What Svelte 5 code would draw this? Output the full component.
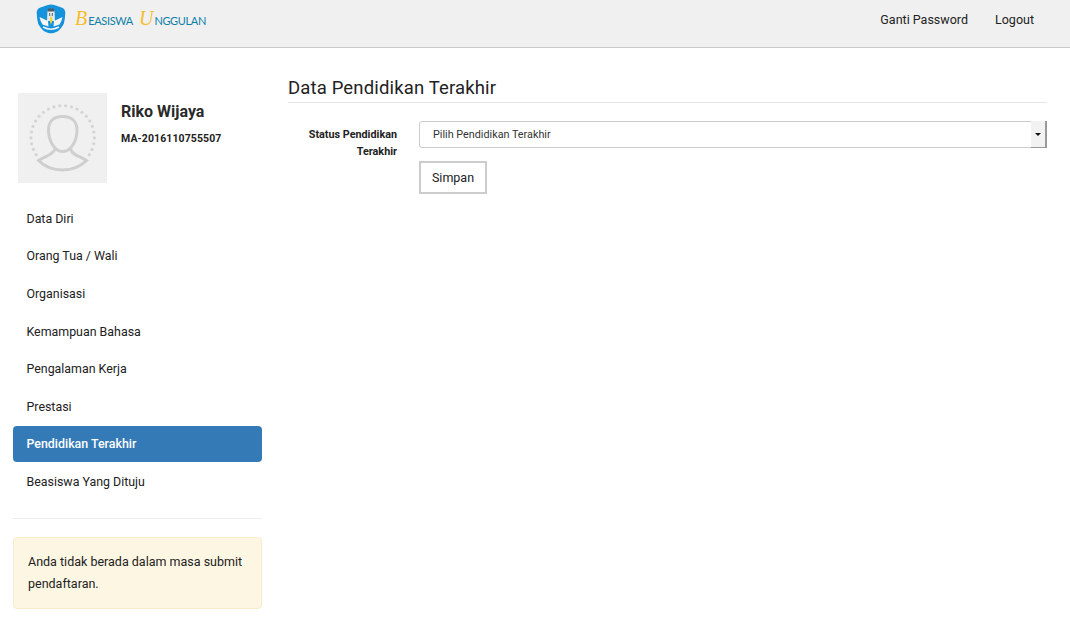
<script>
  const items = ['Data Diri','Orang Tua / Wali','Organisasi','Kemampuan Bahasa','Pengalaman Kerja','Prestasi','Pendidikan Terakhir','Beasiswa Yang Dituju'];
  const dots = Array.from({length: 24}, (_, i) => {
    const a = ((147 + (i / 23) * 246) * Math.PI) / 180;
    return { x: 44.7 + Math.cos(a) * 31.7, y: 44.4 + Math.sin(a) * 31.7 };
  });
</script>

<header class="navbar">
  <div class="brand">
    <svg class="emblem" width="30" height="30" viewBox="0 0 30 30" aria-hidden="true">
      <path d="M15 .5 Q17 .6 19 1.300 L25.500 3.500 Q29.300 4.800 29.300 9 L28.800 15 Q28.500 20 25.500 23.500 Q22 28 17.500 29 Q15 29.600 12.500 29 Q8 28 4.500 23.500 Q1.500 20 1.200 15 L.7 9 Q.7 4.800 4.500 3.500 L11 1.300 Q13 .6 15 .5 Z" fill="#1592dc"/>
      <path d="M3.500 13 L12 17 L12.500 22.500 L6.500 20.500 Q4.500 18 3.500 13 Z M26.500 13 L18 17 L17.500 22.500 L23.500 20.500 Q25.500 18 26.500 13 Z" fill="#f6f6f6"/>
      <path d="M11.500 6.500 L18.500 6.500 L19 17 L11 17 Z" fill="#e3e8ea"/>
      <path d="M12 4.500 L18 4.500 L18.500 7.500 L11.500 7.500 Z" fill="#4d5f6b"/>
      <path d="M13 9 H14.200 V12 H13 Z M15.800 9 H17 V12 H15.800 Z" fill="#6c7c86"/>
      <path d="M15 12 Q17.300 16 15 20.500 Q12.700 16 15 12 Z" fill="#f5d327"/>
      <path d="M7 23 Q15 27.500 23 23" stroke="#f2f5f7" stroke-width="1.600" fill="none"/>
    </svg>
    <span class="wordmark"><span class="word"><i>B</i>EASISWA</span><span class="word"><i>U</i>NGGULAN</span></span>
  </div>
  <nav class="topnav"><a href="#a">Ganti Password</a><a href="#b">Logout</a></nav>
</header>

<div class="page">
  <aside class="sidebar">
    <div class="profile">
      <svg class="avatar" width="89" height="90" viewBox="0 0 89 90" aria-hidden="true">
        <rect width="89" height="90" fill="#f0f0f0"/>
        {#each dots as d}<circle cx={d.x} cy={d.y} r="1.600" fill="#d4d4d4"/>{/each}
        <path d="M44.700 23.500 C35 23.500 30.500 29 30.500 37 C30.500 47 36 58.500 44.700 58.500 C53.500 58.500 59 47 59 37 C59 29 54 23.500 44.700 23.500 Z" fill="none" stroke="#cfcfcf" stroke-width="3"/>
        <path d="M37 56 C34 63 27 63 20.500 67.500 C33 80 56 80 68.500 67.500 C62 63 55 63 52.500 56" fill="none" stroke="#cfcfcf" stroke-width="3"/>
      </svg>
      <div class="who">
        <h2>Riko Wijaya</h2>
        <p>MA-2016110755507</p>
      </div>
    </div>
    <ul class="menu">
      {#each items as item}
        <li><a href="#m" class:active={item === 'Pendidikan Terakhir'}>{item}</a></li>
      {/each}
    </ul>
    <hr />
    <div class="notice">Anda tidak berada dalam masa submit pendaftaran.</div>
  </aside>

  <main class="content">
    <h1>Data Pendidikan Terakhir</h1>
    <form class="form">
      <div class="label">Status Pendidikan Terakhir</div>
      <div class="fields">
        <div class="select">
          <span class="value">Pilih Pendidikan Terakhir</span>
          <span class="caret-box"><span class="caret"></span></span>
        </div>
        <button type="button">Simpan</button>
      </div>
    </form>
  </main>
</div>

<style>
  :global(body) {
    margin: 0;
    background: #fff;
    color: #222;
    font-family: Roboto, "Liberation Sans", sans-serif;
    font-size: 13px;
  }
  a { color: #222; text-decoration: none; }
  .navbar {
    height: 47px;
    background: #f0f0f0;
    border-bottom: 1px solid #c9c9c9;
    display: flex;
    align-items: center;
    justify-content: space-between;
    padding: 0 36px;
  }
  .brand { display: flex; align-items: center; gap: 9px; margin-bottom: 10px; }
  .wordmark { display: flex; gap: 6px; font-family: Lato, sans-serif; font-size: 11px; letter-spacing: -.35px; color: #0f7fa8; align-items: baseline; }
  .word i { font-family: "Liberation Serif", serif; font-size: 20px; letter-spacing: 0; color: #f6bd2c; font-weight: 400; margin-right: 1px; }
  .topnav { display: flex; gap: 27px; margin-bottom: 9px; }
  .topnav a { font-size: 12.500px; }
  .page { display: flex; padding: 0 23px 0 13px; gap: 26px; }
  .sidebar { width: 249px; flex: none; padding-top: 45px; }
  .profile { display: flex; padding-left: 5px; gap: 14px; }
  .avatar { display: block; flex: none; }
  .who h2 { margin: 9px 0 0; font-size: 16px; line-height: 20px; font-weight: 700; color: #2a2a2a; }
  .who p { margin: 9px 0 0; font-size: 10.500px; line-height: 16px; font-weight: 700; letter-spacing: .1px; color: #222; }
  .menu { list-style: none; margin: 17.900px 0 0; padding: 0; display: flex; flex-direction: column; gap: 1.570px; }
  .menu a { display: block; height: 36px; line-height: 36px; padding-left: 13.500px; border-radius: 4px; font-size: 12.400px; }
  .menu a.active { background: #337ab7; color: #fff; font-weight: 500; }
  hr { border: 0; border-top: 1px solid #eee; margin: 18.100px 0 18px; }
  .notice {
    box-sizing: border-box;
    height: 72px;
    padding: 13px 14px;
    background: #fdf6e2;
    border: 1px solid #faebcc;
    border-radius: 4px;
    font-size: 12.500px;
    line-height: 22px;
    color: #222;
  }
  .content { flex: 1; padding-top: 28px; }
  h1 {
    margin: 0;
    font-size: 18.500px;
    line-height: 25px;
    font-weight: 400;
    padding-bottom: 1px;
    border-bottom: 1px solid #e5e5e5;
    letter-spacing: .15px;
    color: #222;
  }
  .form { display: flex; margin-top: 18px; }
  .label { width: 109px; flex: none; text-align: right; font-size: 10.800px; font-weight: 700; line-height: 16.500px; padding-top: 6px; color: #222; }
  .fields { flex: 1; margin-left: 22px; }
  .select {
    height: 27px;
    box-sizing: border-box;
    border: 1px solid #ccc;
    border-radius: 3px;
    display: flex;
    justify-content: space-between;
    align-items: stretch;
  }
  .value { font-size: 10.800px; line-height: 25px; padding-left: 13px; color: #333; }
  .caret-box { width: 16px; margin: -1px -1px -1px 0; background: #f2f2f2; border-right: 2px solid #999; border-bottom: 1px solid #999; box-sizing: border-box; display: flex; align-items: center; justify-content: center; }
  .caret { width: 0; height: 0; border-left: 3px solid transparent; border-right: 3px solid transparent; border-top: 3px solid #111; }
  button {
    margin-top: 13px;
    display: block;
    width: 68px;
    height: 33px;
    background: #fff;
    border: 2px solid #ccc;
    font: 400 12.500px Roboto, sans-serif;
    color: #222;
    padding: 0;
  }
</style>
